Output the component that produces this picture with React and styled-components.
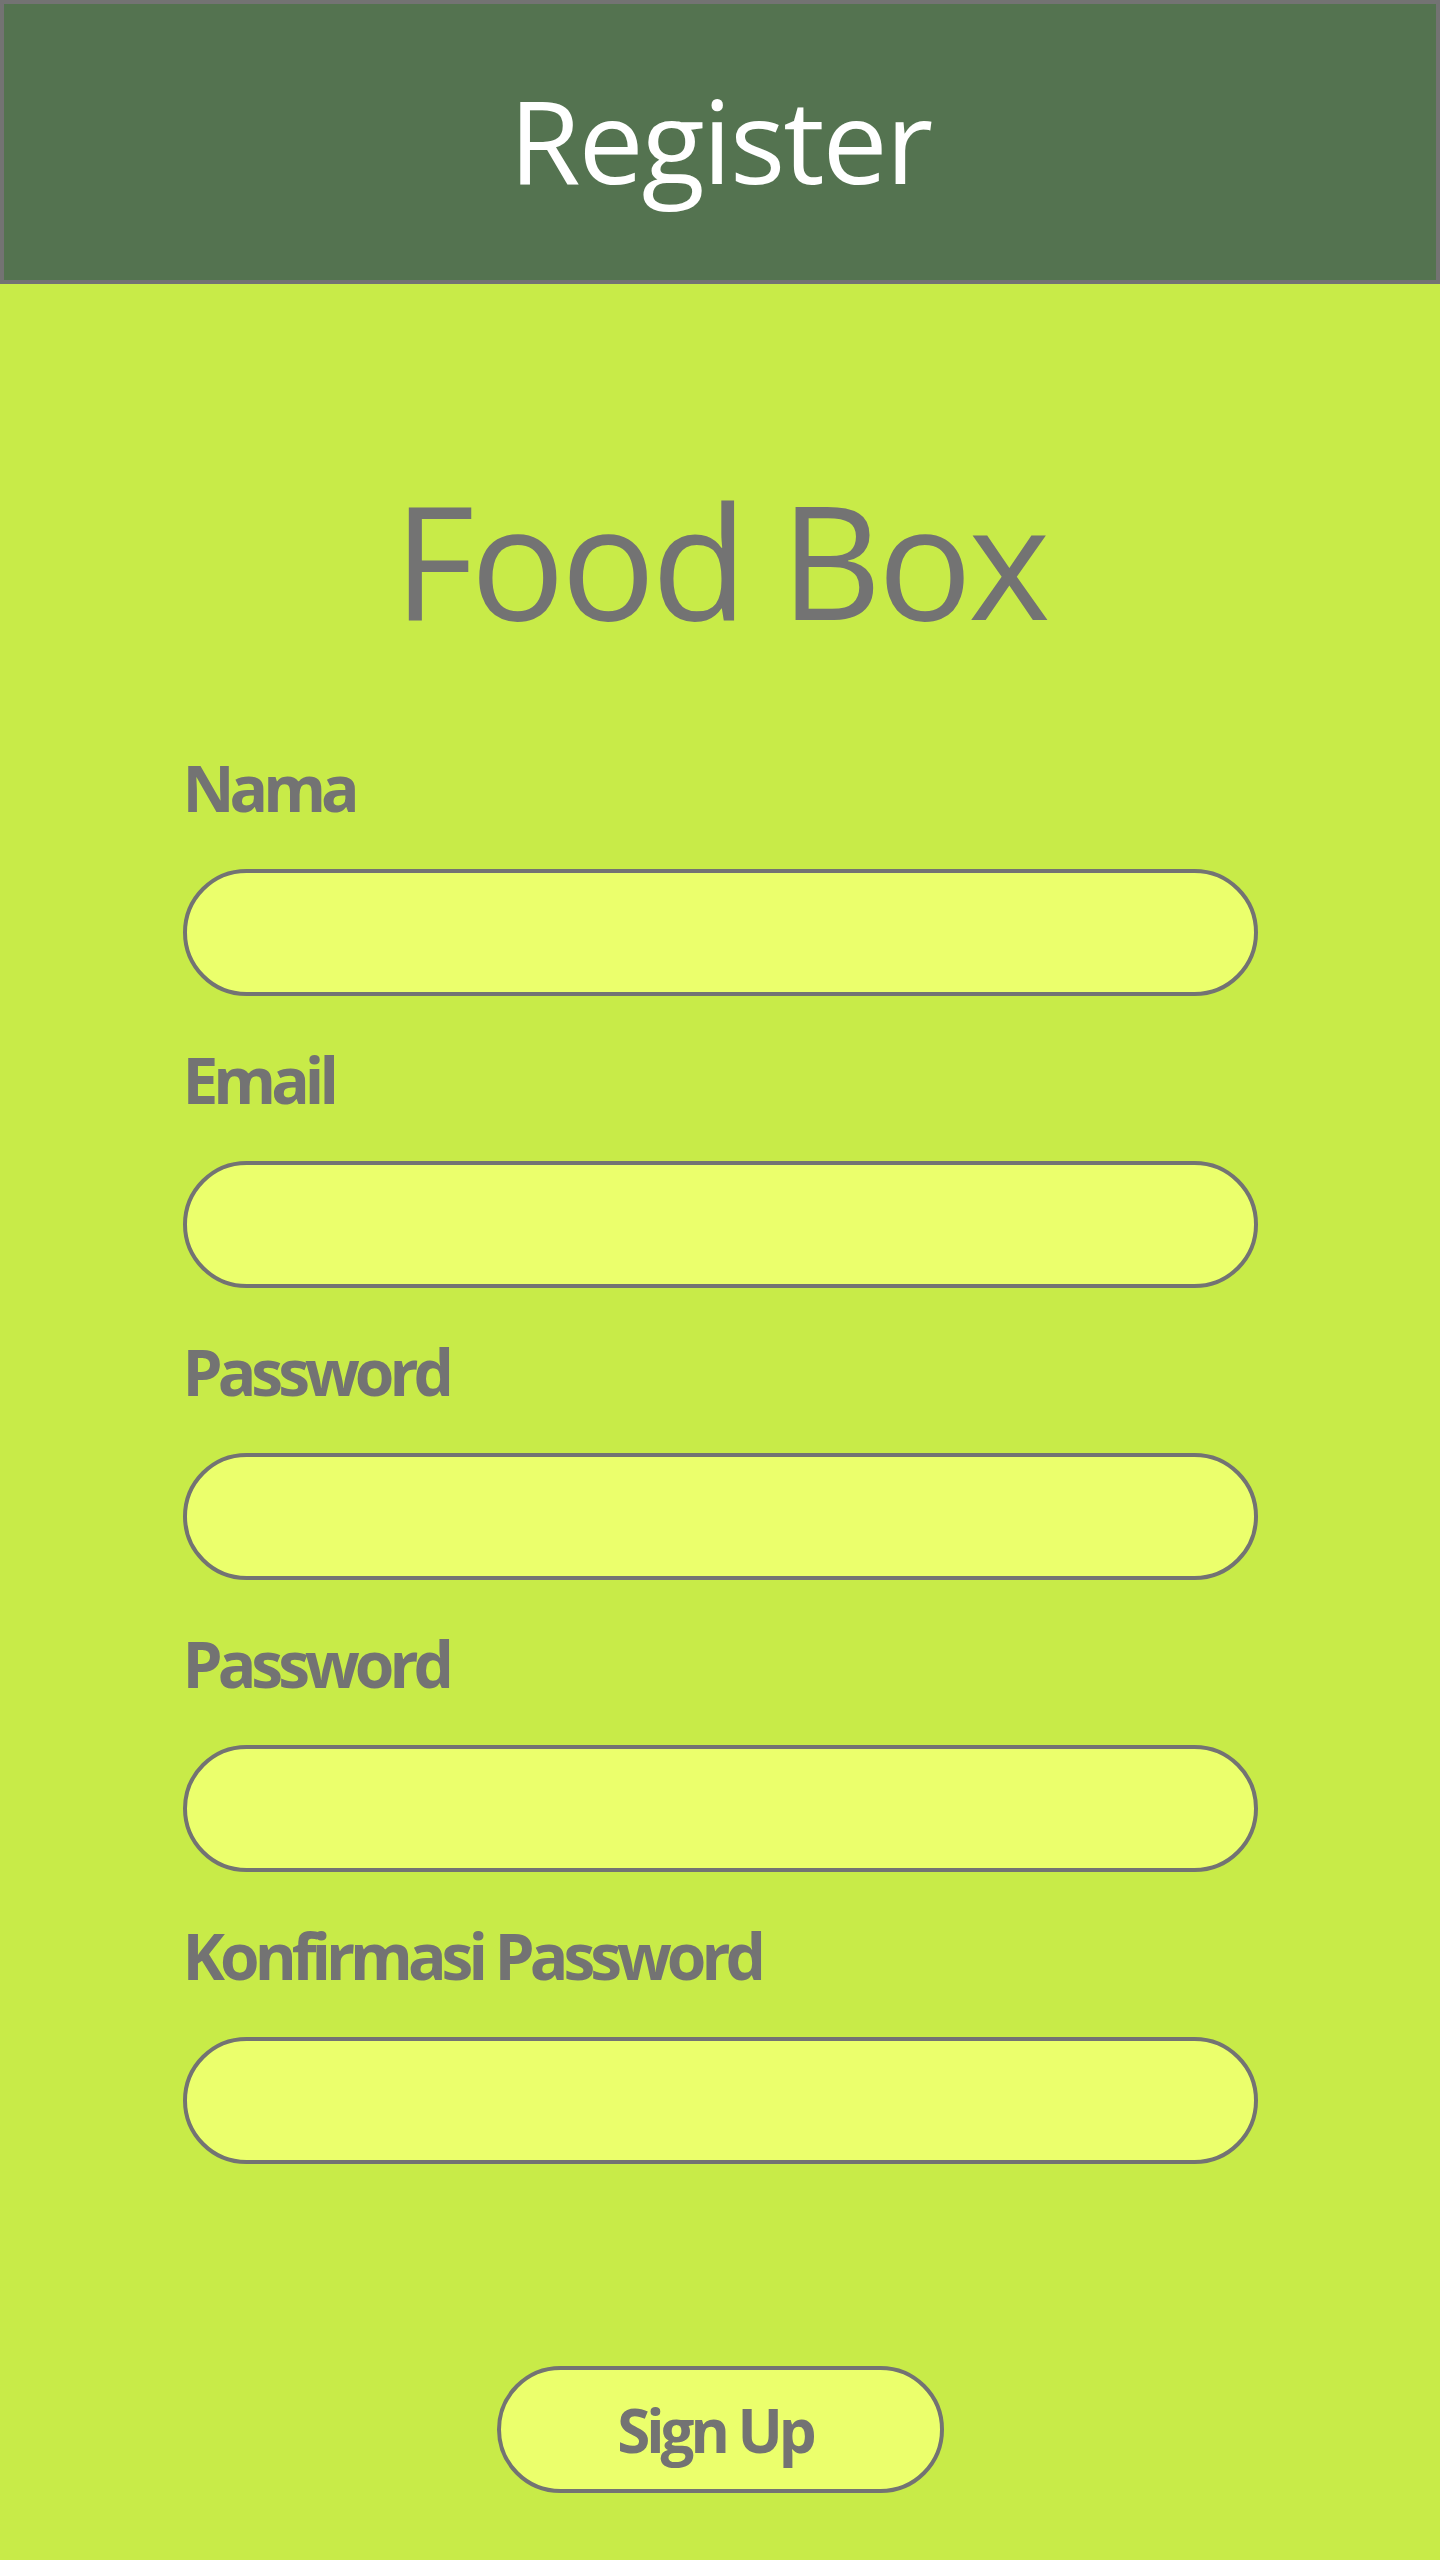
import React from 'react';
import styled, { createGlobalStyle } from 'styled-components';

const GRAY = '#737373';
const LIME = '#c8eb48';
const PALE = '#ebff6c';
const HEADER = '#547350';

const GlobalStyle = createGlobalStyle`
  * {
    box-sizing: border-box;
  }

  body {
    margin: 0;
    background: ${LIME};
    font-family: 'Open Sans', 'Noto Sans', sans-serif;
  }
`;

const fields = [
  { id: 'nama', label: 'Nama', type: 'text' },
  { id: 'email', label: 'Email', type: 'email' },
  { id: 'password', label: 'Password', type: 'password' },
  { id: 'password2', label: 'Password', type: 'password' },
  { id: 'konfirmasi', label: 'Konfirmasi Password', type: 'password' },
];

const App = () => {
  return (
    <Page>
      <GlobalStyle />
      <Header>
        <HeaderTitle>Register</HeaderTitle>
      </Header>
      <Main>
        <Brand>Food Box</Brand>
        <Form onSubmit={(e) => e.preventDefault()}>
          {fields.map((f) => (
            <Field key={f.id}>
              <Label htmlFor={f.id}>{f.label}</Label>
              <Input id={f.id} type={f.type} />
            </Field>
          ))}
          <SubmitButton type="submit">Sign Up</SubmitButton>
        </Form>
      </Main>
    </Page>
  );
};

export default App;

const Page = styled.div`
  min-height: 2560px;
  background: ${LIME};
`;

const Header = styled.header`
  height: 284px;
  background: ${HEADER};
  border: 4px solid ${GRAY};
  display: flex;
  align-items: center;
  justify-content: center;
`;

const HeaderTitle = styled.h1`
  margin: 0;
  color: #ffffff;
  font-size: 116px;
  font-weight: 400;
  line-height: 1;
  letter-spacing: -2px;
  transform: translateY(-3px);
`;

const Main = styled.main`
  display: flex;
  flex-direction: column;
  align-items: center;
  padding-top: 197px;
`;

const Brand = styled.h2`
  margin: 0 0 117px;
  color: ${GRAY};
  font-size: 157px;
  font-weight: 400;
  line-height: 1;
  letter-spacing: -4px;
`;

const Form = styled.form`
  width: 1075px;
  display: flex;
  flex-direction: column;
  gap: 51px;
`;

const Field = styled.div`
  display: flex;
  flex-direction: column;
  gap: 48px;
`;

const Label = styled.label`
  color: ${GRAY};
  font-size: 64px;
  font-weight: 700;
  line-height: 66px;
  letter-spacing: -5px;
`;

const Input = styled.input`
  width: 100%;
  height: 127px;
  border: 4px solid ${GRAY};
  border-radius: 64px;
  background: ${PALE};
  padding: 0 48px;
  font-size: 48px;
  font-family: inherit;
  color: ${GRAY};
  outline: none;
`;

const SubmitButton = styled.button`
  align-self: center;
  margin-top: 151px;
  width: 447px;
  height: 127px;
  border: 4px solid ${GRAY};
  border-radius: 64px;
  background: ${PALE};
  color: ${GRAY};
  font-family: inherit;
  font-size: 60px;
  font-weight: 700;
  letter-spacing: -4px;
  cursor: pointer;
  padding: 0 10px 0 0;
`;
